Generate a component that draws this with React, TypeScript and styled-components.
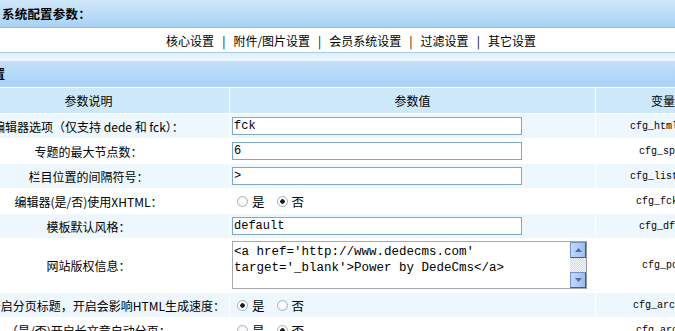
import React from "react";
import styled, { createGlobalStyle, css } from "styled-components";

const GlobalStyle = createGlobalStyle`
  html, body {
    margin: 0;
    padding: 0;
    background: #ffffff;
    overflow: hidden;
  }
  body {
    font-family: "Noto Sans CJK SC", "DejaVu Sans", sans-serif;
    font-size: 12px;
    color: #000;
  }
`;

const cjk = `"Noto Sans CJK SC", "DejaVu Sans", sans-serif`;
const mono = `"Liberation Mono", "DejaVu Sans Mono", "Noto Sans CJK SC", monospace`;

const Page = styled.div`
  width: 806px;
  margin-left: -52px;
  display: flex;
  flex-direction: column;
`;

const TitleBar = styled.div`
  height: 27px;
  border-bottom: 1px solid #93bde2;
  background: linear-gradient(#d0e7fb, #a9d2f6);
  display: flex;
  align-items: center;
  padding-left: 54px;
  font-family: ${cjk};
  font-weight: bold;
  font-size: 12.5px;
  letter-spacing: 0.2px;
`;

const NavRow = styled.div`
  height: 24px;
  border-bottom: 1px solid #a9cbe7;
  background: #ffffff;
  display: flex;
  align-items: center;
  justify-content: center;
  font-family: ${cjk};
  font-size: 12px;
`;

const NavLink = styled.a`
  color: #000;
  text-decoration: none;
  cursor: pointer;
`;

const NavSep = styled.span`
  margin: 0 8px;
`;

const Band = styled.div`
  height: 8px;
  background: linear-gradient(#dff0fc, #eef7fe);
`;

const SectionBar = styled.div`
  height: 25px;
  border-bottom: 1px solid #b3d4ef;
  background: linear-gradient(#c3e0fb, #a8d2f6);
  display: flex;
  align-items: center;
  padding-left: 9px;
  font-family: ${cjk};
  font-weight: bold;
  font-size: 12px;
  margin-bottom: 1px;
`;

const ConfigGrid = styled.div`
  display: grid;
  grid-template-columns: 281px 365px 158px;
  column-gap: 1px;
  row-gap: 1px;
  background: #ffffff;
`;

type Tone = "head" | "light" | "plain";

const toneBg: Record<Tone, string> = {
  head: "#cde8f9",
  light: "#edf7fd",
  plain: "#ffffff",
};

const Cell = styled.div<{ $tone: Tone; $align?: "center" | "left" }>`
  background: ${(p) => toneBg[p.$tone]};
  min-height: ${(p) => (p.$tone === "head" ? "25px" : "24px")};
  display: flex;
  align-items: center;
  justify-content: ${(p) => (p.$align === "left" ? "flex-start" : "center")};
  padding-left: ${(p) => (p.$align === "left" ? "2px" : "0")};
  font-family: ${cjk};
  font-size: 12px;
  white-space: nowrap;
  overflow: hidden;
`;

const VarName = styled.span`
  font-family: ${mono};
  font-size: 10px;
`;

const TextInput = styled.input`
  box-sizing: border-box;
  width: 290px;
  height: 18px;
  border: 1px solid #7fa7c6;
  padding: 0 1px;
  margin: 0;
  font-family: ${mono};
  font-size: 12px;
  color: #000;
  background: #fff;
  outline: none;
`;

const RadioGroup = styled.div`
  display: flex;
  align-items: center;
  padding-left: 5px;
  gap: 12px;
`;

const RadioLabel = styled.label`
  display: flex;
  align-items: center;
  gap: 4px;
  font-family: ${cjk};
  font-size: 12.5px;
`;

const Radio = styled.input.attrs({ type: "radio" })`
  appearance: none;
  -webkit-appearance: none;
  margin: 0;
  width: 11px;
  height: 11px;
  border-radius: 50%;
  border: 1px solid #a6b1bd;
  background: radial-gradient(circle, #ffffff 0, #eef1f4 100%);
  box-sizing: border-box;
  ${(p) =>
    p.checked &&
    css`
      background: radial-gradient(circle, #1d1d1d 0 2px, #ffffff 2.5px, #eef1f4 100%);
    `}
`;

const AreaBox = styled.div`
  display: flex;
  width: 355px;
  height: 48px;
  border: 1px solid #a4aab1;
  border-right-color: #8c949c;
  box-sizing: border-box;
  margin: 2px 0 3px;
  background: #fff;
`;

const AreaText = styled.textarea`
  flex: 1;
  border: none;
  resize: none;
  outline: none;
  overflow: hidden;
  margin: 0;
  padding: 2px 1px;
  font-family: ${mono};
  font-size: 12.5px;
  line-height: 16px;
  color: #000;
`;

const ScrollTrack = styled.div`
  width: 16px;
  display: flex;
  flex-direction: column;
`;

const ScrollButton = styled.div`
  height: 16px;
  box-sizing: border-box;
  border: 1px solid #6f93c9;
  border-right-color: #3d5f95;
  border-bottom-color: #3d5f95;
  background: linear-gradient(90deg, #c4d8f8, #9bbcf0);
  display: flex;
  align-items: center;
  justify-content: center;
`;

const ScrollRail = styled.div`
  flex: 1;
  background: repeating-conic-gradient(#c6d9f6 0 25%, #f4f8fe 0 50%) 0 0 / 2px 2px;
`;

const Arrow = ({ down }: { down?: boolean }) => (
  <svg width="7" height="4" viewBox="0 0 7 4">
    <path d={down ? "M0 0 H7 L3.5 4 Z" : "M0 4 H7 L3.5 0 Z"} fill="#4d6fa6" />
  </svg>
);

type Row =
  | { label: string; kind: "text"; value: string; name: string }
  | { label: string; kind: "radio"; yes: boolean; name: string }
  | { label: string; kind: "area"; value: string; name: string };

const rows: Row[] = [
  { label: "编辑器选项（仅支持 dede 和 fck）：", kind: "text", value: "fck", name: "cfg_html_editor" },
  { label: "专题的最大节点数：", kind: "text", value: "6", name: "cfg_specnote" },
  { label: "栏目位置的间隔符号：", kind: "text", value: ">", name: "cfg_list_symbol" },
  { label: "编辑器(是/否)使用XHTML：", kind: "radio", yes: false, name: "cfg_fck_xhtml" },
  { label: "模板默认风格：", kind: "text", value: "default", name: "cfg_df_style" },
  {
    label: "网站版权信息：",
    kind: "area",
    value: "<a href='http://www.dedecms.com'\ntarget='_blank'>Power by DedeCms</a>",
    name: "cfg_powerby",
  },
  { label: "(是/否)开启分页标题，开启会影响HTML生成速度：", kind: "radio", yes: true, name: "cfg_arcsptitle" },
  { label: "（是/否)开启长文章自动分页：", kind: "radio", yes: false, name: "cfg_arcautosp" },
];

const navItems = ["核心设置", "附件/图片设置", "会员系统设置", "过滤设置", "其它设置"];

function ValueField({ row }: { row: Row }) {
  if (row.kind === "text") {
    return <TextInput defaultValue={row.value} />;
  }
  if (row.kind === "area") {
    return (
      <AreaBox>
        <AreaText defaultValue={row.value} spellCheck={false} />
        <ScrollTrack>
          <ScrollButton>
            <Arrow />
          </ScrollButton>
          <ScrollRail />
          <ScrollButton>
            <Arrow down />
          </ScrollButton>
        </ScrollTrack>
      </AreaBox>
    );
  }
  return (
    <RadioGroup>
      <RadioLabel>
        <Radio name={row.name} checked={row.yes} readOnly />是
      </RadioLabel>
      <RadioLabel>
        <Radio name={row.name} checked={!row.yes} readOnly />否
      </RadioLabel>
    </RadioGroup>
  );
}

export default function App() {
  return (
    <>
      <GlobalStyle />
      <Page>
        <TitleBar>系统配置参数：</TitleBar>
        <NavRow>
          {navItems.map((item, i) => (
            <React.Fragment key={item}>
              {i > 0 && <NavSep>|</NavSep>}
              <NavLink>{item}</NavLink>
            </React.Fragment>
          ))}
        </NavRow>
        <Band />
        <SectionBar>站点设置</SectionBar>
        <ConfigGrid>
          <Cell $tone="head">参数说明</Cell>
          <Cell $tone="head">参数值</Cell>
          <Cell $tone="head">变量名称</Cell>
          {rows.map((row, i) => {
            const tone: Tone = i % 2 === 0 ? "light" : "plain";
            return (
              <React.Fragment key={row.name}>
                <Cell $tone={tone}>{row.label}</Cell>
                <Cell $tone={tone} $align="left">
                  <ValueField row={row} />
                </Cell>
                <Cell $tone={tone}>
                  <VarName>{row.name}</VarName>
                </Cell>
              </React.Fragment>
            );
          })}
        </ConfigGrid>
      </Page>
    </>
  );
}
